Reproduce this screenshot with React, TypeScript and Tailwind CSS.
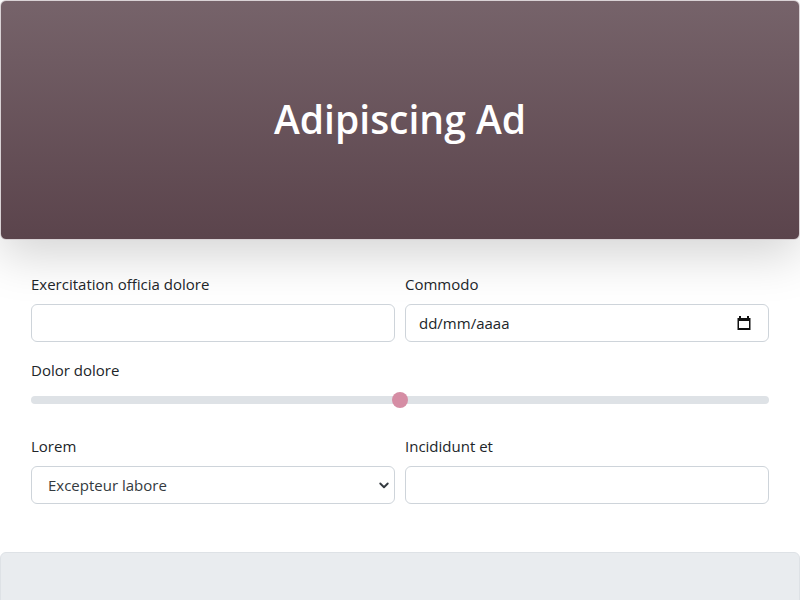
import React from 'react';

export default function App() {
  return (
    <div className="min-h-[600px] bg-white font-['Open_Sans',sans-serif] text-[#212529] overflow-hidden">
      <div className="h-[240px] rounded-md border border-[#d9d2d5] bg-gradient-to-b from-[#76636a] to-[#5b444c] shadow-[0_16px_48px_rgba(0,0,0,0.17)] flex items-center justify-center">
        <h1 className="text-[39px] font-semibold text-white -mt-[2px]">Adipiscing Ad</h1>
      </div>

      <div className="px-[31px] pt-[32px] text-[15px]">
        <div className="grid grid-cols-2 gap-x-[10px]">
          <div>
            <label className="block leading-6 mb-2">Exercitation officia dolore</label>
            <input type="text" className="w-full h-[38px] rounded-md border border-[#ced4da] bg-white px-3 outline-none" />
          </div>
          <div>
            <label className="block leading-6 mb-2">Commodo</label>
            <div className="h-[38px] rounded-md border border-[#ced4da] bg-white pl-[13px] pr-[16px] flex items-center justify-between">
              <span className="text-[#212529]">dd/mm/aaaa</span>
              <svg width="16" height="16" viewBox="0 0 16 16">
                <path d="M3 1h2v2h6V1h2v2h1.5v12H1.5V3H3V1zM3 6v7h10V6H3z" fill="#111" />
              </svg>
            </div>
          </div>
        </div>

        <div className="mt-4">
          <label className="block leading-6">Dolor dolore</label>
          <div className="relative h-[24px] mt-[6px] flex items-center">
            <div className="w-full h-2 rounded-full bg-[#dee2e6]" />
            <div className="absolute left-1/2 -translate-x-1/2 w-4 h-4 rounded-full bg-[#d58da4]" />
          </div>
        </div>

        <div className="grid grid-cols-2 gap-x-[10px] mt-[22px]">
          <div>
            <label className="block leading-6 mb-2">Lorem</label>
            <div className="relative h-[38px] rounded-md border border-[#ced4da] bg-white pl-4 flex items-center">
              <span className="text-[#343a40]">Excepteur labore</span>
              <svg className="absolute right-[4px]" width="12" height="12" viewBox="0 0 16 16">
                <path d="M3 6l5 5 5-5" fill="none" stroke="#343a40" strokeWidth="2.5" strokeLinecap="round" strokeLinejoin="round" />
              </svg>
            </div>
          </div>
          <div>
            <label className="block leading-6 mb-2">Incididunt et</label>
            <input type="text" className="w-full h-[38px] rounded-md border border-[#ced4da] bg-white px-3 outline-none" />
          </div>
        </div>
      </div>

      <div className="mt-[48px] h-[60px] rounded-t-md border border-[#dee2e6] bg-[#e9ecef]" />
    </div>
  );
}
